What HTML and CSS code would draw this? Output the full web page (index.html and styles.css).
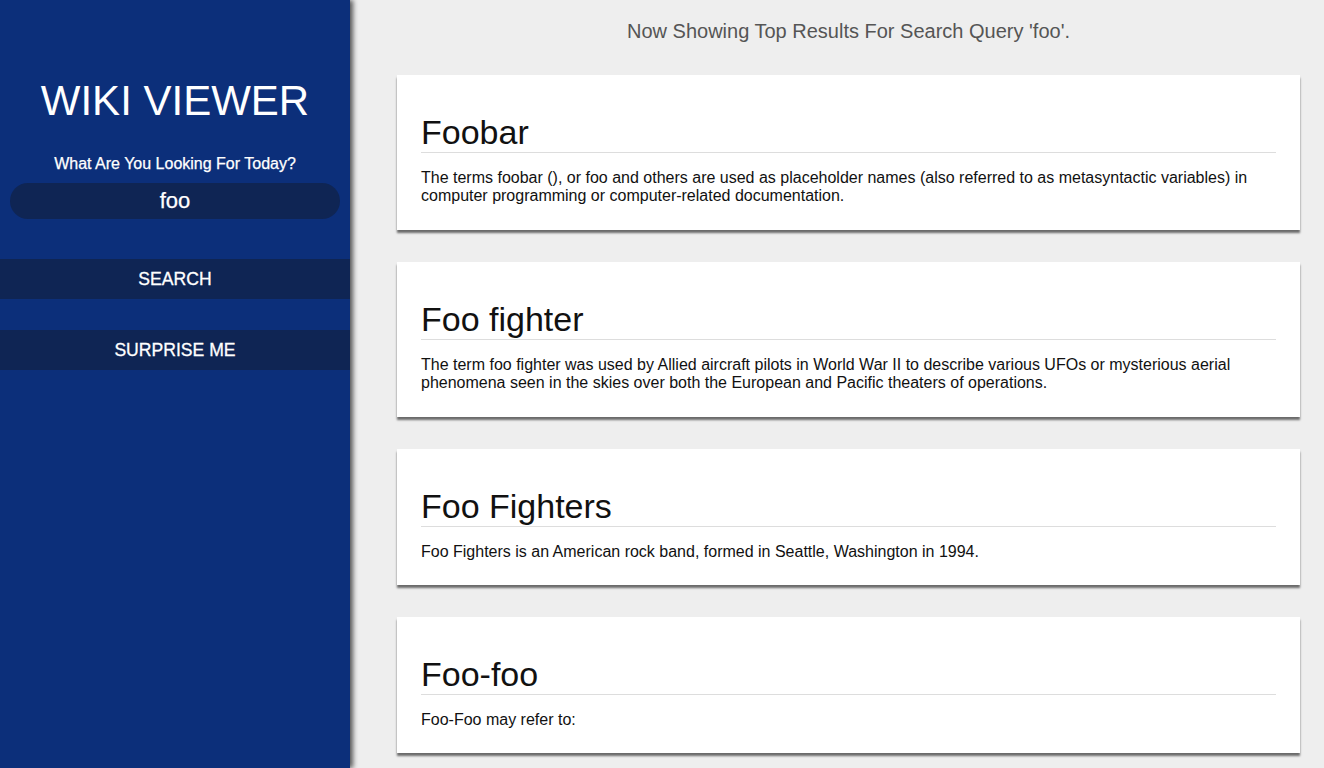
FILE: index.html
```html
<!DOCTYPE html>
<html>
<head>
<meta charset="utf-8">
<title>Wiki Viewer</title>
<link rel="stylesheet" href="styles.css">
</head>
<body>
<aside class="sidebar">
  <h1 class="brand">WIKI VIEWER</h1>
  <p class="prompt">What Are You Looking For Today?</p>
  <div class="search-box">foo</div>
  <div class="actions">
    <div class="btn">SEARCH</div>
    <div class="btn">SURPRISE ME</div>
  </div>
</aside>
<main class="main">
  <p class="status">Now Showing Top Results For Search Query 'foo'.</p>
  <div class="results">
    <article class="card">
      <h2 class="card-title">Foobar</h2>
      <p class="card-text">The terms foobar (), or foo and others are used as placeholder names (also referred to as metasyntactic variables) in computer programming or computer-related documentation.</p>
    </article>
    <article class="card">
      <h2 class="card-title">Foo fighter</h2>
      <p class="card-text">The term foo fighter was used by Allied aircraft pilots in World War II to describe various UFOs or mysterious aerial phenomena seen in the skies over both the European and Pacific theaters of operations.</p>
    </article>
    <article class="card">
      <h2 class="card-title">Foo Fighters</h2>
      <p class="card-text">Foo Fighters is an American rock band, formed in Seattle, Washington in 1994.</p>
    </article>
    <article class="card">
      <h2 class="card-title">Foo-foo</h2>
      <p class="card-text">Foo-Foo may refer to:</p>
    </article>
  </div>
</main>
</body>
</html>
```
FILE: styles.css
```css
html, body {
  margin: 0;
  padding: 0;
  height: 100%;
  overflow: hidden;
}
body {
  display: flex;
  font-family: "Liberation Sans", Arial, Helvetica, sans-serif;
  background: #eeeeee;
}
.sidebar {
  width: 350px;
  flex: none;
  height: 100vh;
  background: #0c2f7a;
  box-shadow: 3px 0 5px #555;
  color: #fff;
  text-align: center;
  position: relative;
  z-index: 1;
  padding-top: 77px;
  box-sizing: border-box;
}
.brand {
  margin: 0;
  font-size: 42px;
  font-weight: normal;
  line-height: 48px;
}
.prompt {
  margin: 30px 0 0;
  font-size: 16px;
  line-height: 18px;
  -webkit-text-stroke: 0.25px #fff;
}
.search-box {
  margin: 10px 10px 0;
  height: 36px;
  border-radius: 18px;
  background: #0f2554;
  font-size: 22px;
  line-height: 36px;
  -webkit-text-stroke: 0.25px #fff;
}
.actions {
  margin-top: 40px;
  display: flex;
  flex-direction: column;
  gap: 31px;
}
.btn {
  height: 40px;
  line-height: 40px;
  background: #0f2554;
  font-size: 17.6px;
  -webkit-text-stroke: 0.3px #fff;
}
.main {
  flex: 1;
  padding: 20px 24px 0 47px;
  min-width: 0;
}
.status {
  margin: 0 0 32px;
  text-align: center;
  font-size: 20px;
  line-height: 23px;
  color: #555;
}
.results {
  display: flex;
  flex-direction: column;
  gap: 32px;
}
.card {
  background: #fff;
  padding: 38px 24px 24px;
  box-shadow: 0 3px 2px rgba(0, 0, 0, 0.55);
  color: #111;
}
.card-title {
  margin: 0;
  font-size: 34px;
  font-weight: normal;
  line-height: 39px;
  border-bottom: 1px solid #dddddd;
}
.card-text {
  margin: 16px 0 0;
  font-size: 16px;
  line-height: 18.4px;
}
```
